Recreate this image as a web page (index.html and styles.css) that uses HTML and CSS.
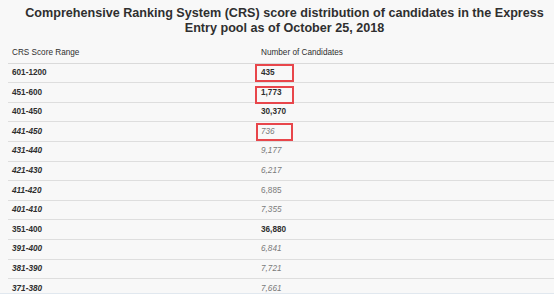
FILE: index.html
```html
<!DOCTYPE html>
<html>
<head>
<meta charset="utf-8">
<link rel="stylesheet" href="styles.css">
</head>
<body>
<div class="page">
  <h1 class="title">Comprehensive Ranking System (CRS) score distribution of candidates in the Express Entry pool as of October 25, 2018</h1>
  <table class="crs">
    <thead>
      <tr><th class="c1">CRS Score Range</th><th class="c2">Number of Candidates</th></tr>
    </thead>
    <tbody>
      <tr class="main"><td class="c1">601-1200</td><td class="c2"><span class="mark m1"></span>435</td></tr>
      <tr class="main"><td class="c1">451-600</td><td class="c2"><span class="mark m2"></span>1,773</td></tr>
      <tr class="main"><td class="c1">401-450</td><td class="c2">30,370</td></tr>
      <tr class="sub"><td class="c1">441-450</td><td class="c2"><span class="mark m3"></span>736</td></tr>
      <tr class="sub"><td class="c1">431-440</td><td class="c2">9,177</td></tr>
      <tr class="sub"><td class="c1">421-430</td><td class="c2">6,217</td></tr>
      <tr class="sub"><td class="c1">411-420</td><td class="c2 upright">6,885</td></tr>
      <tr class="sub"><td class="c1">401-410</td><td class="c2">7,355</td></tr>
      <tr class="main"><td class="c1">351-400</td><td class="c2">36,880</td></tr>
      <tr class="sub"><td class="c1">391-400</td><td class="c2">6,841</td></tr>
      <tr class="sub"><td class="c1">381-390</td><td class="c2">7,721</td></tr>
      <tr class="sub"><td class="c1">371-380</td><td class="c2">7,661</td></tr>
    </tbody>
  </table>
</div>
</body>
</html>
```
FILE: styles.css
```css
html, body {
  margin: 0;
  padding: 0;
  background: #f8f8f8;
  overflow: hidden;
}
body {
  height: 293px;
  border-bottom: 1px solid #e1e8ef;
}
.page {
  margin-left: 8px;
  width: 553px;
  padding-top: 6px;
  font-family: "Liberation Sans", Arial, sans-serif;
  color: #333;
}
.title {
  margin: 0 0 7px 0;
  font-size: 12.6px;
  line-height: 15.3px;
  font-weight: bold;
  text-align: center;
  color: #2f2f2f;
}
.crs {
  width: 100%;
  border-collapse: collapse;
  font-size: 8.2px;
}
.crs tr {
  height: 19.6px;
}
.crs th, .crs td {
  padding: 0 0 0 4px;
  text-align: left;
  vertical-align: middle;
  line-height: 10px;
}
.crs th {
  font-weight: normal;
  color: #2f2f2f;
}
.crs .c1 {
  width: 245px;
}
.crs .c2 {
  position: relative;
}
.crs tbody tr {
  border-top: 1px solid #dedede;
}
.crs thead tr {
  border-bottom: 1px solid #dadada;
}
.main td {
  font-weight: bold;
  color: #2f2f2f;
}
.sub .c1 {
  font-weight: bold;
  font-style: italic;
  color: #2f2f2f;
}
.sub .c2 {
  font-style: italic;
  color: #7a7a7a;
}
.sub .c2.upright {
  font-style: normal;
}
.mark {
  position: absolute;
  left: -2px;
  width: 35px;
  height: 14px;
  border: 2px solid #e8464b;
}
.m1 { top: 0.5px; }
.m2 { top: 2.5px; }
.m3 { top: 0.5px; left: -1px; width: 33px; }
```
